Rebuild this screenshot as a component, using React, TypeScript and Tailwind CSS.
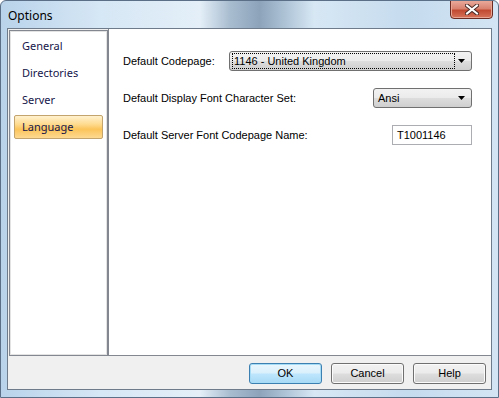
import React from "react";

const navItems = ["General", "Directories", "Server", "Language"];

function ComboBox({ value, focused, className }: { value: string; focused?: boolean; className: string }) {
    return (
        <div
            className={`relative flex items-center h-[20px] rounded-[3px] border border-[#707070] bg-[linear-gradient(180deg,#f2f2f2_0%,#ebebeb_48%,#dddddd_52%,#cfcfcf_100%)] ${className}`}>
            <div
                className={`flex-1 ml-[3px] mr-[17px] h-[14px] flex items-center pl-[1px] ${
                    focused ? "outline outline-1 outline-dotted outline-[#000]" : ""
                }`}>
                <span className="text-[11px] text-black leading-none">{value}</span>
            </div>
            <svg className="absolute right-[6px] top-[7px]" width="7" height="4" viewBox="0 0 7 4">
                <path d="M0 0h7L3.5 4z" fill="#000" />
            </svg>
        </div>
    );
}

function Button({ label, primary }: { label: string; primary?: boolean }) {
    return (
        <div
            className={`w-[73px] h-[21px] rounded-[3px] border flex items-center justify-center text-[11px] text-black ${
                primary
                    ? "border-[#3c7fb1] shadow-[inset_0_0_0_1px_#a6dcf5] bg-[linear-gradient(180deg,#eaf6fd_0%,#d9f0fc_48%,#bee6fd_52%,#a7d9f5_100%)]"
                    : "border-[#707070] shadow-[inset_0_0_0_1px_#fbfbfb] bg-[linear-gradient(180deg,#f2f2f2_0%,#ebebeb_48%,#dddddd_52%,#cfcfcf_100%)]"
            }`}>
            {label}
        </div>
    );
}

export default function App() {
    return (
        <div
            className="w-[499px] h-[398px] flex flex-col rounded-t-[6px] border border-[#5b6f86] bg-[linear-gradient(90deg,#b9d3ea_0%,#d6e7f5_20%,#e4eff8_40%,#a9bdd0_46%,#8ca3ba_52%,#b3c8da_58%,#d7e7f4_63%,#c5dbee_82%,#d3e5f4_100%)] overflow-hidden"
            style={{ fontFamily: '"Liberation Sans", Arial, sans-serif' }}>
            {/* Title bar */}
            <div className="relative h-[27px] flex items-center px-[7px]">
                <span className="text-[12px] text-black pt-[3px]" style={{ fontFamily: '"Noto Sans", sans-serif' }}>
                    Options
                </span>
                <div className="absolute right-[5px] top-[-1px] w-[43px] h-[19px] rounded-b-[4px] border border-[#6b2a22] shadow-[inset_0_0_0_1px_#e9a593] bg-[linear-gradient(180deg,#e9a99a_0%,#d8826f_45%,#c24a32_55%,#d6735a_100%)] flex items-center justify-center">
                    <svg width="14" height="11" viewBox="0 0 14 11">
                        <path d="M2 1.5L12 9.5M12 1.5L2 9.5" stroke="#4a2a26" strokeWidth="4" strokeLinecap="square" />
                        <path d="M2 1.5L12 9.5M12 1.5L2 9.5" stroke="#fff" strokeWidth="2" strokeLinecap="square" />
                    </svg>
                </div>
            </div>

            {/* Client area */}
            <div className="flex-1 mx-[6px] mb-[7px] border border-[#6d7b8a] bg-[#f0f0f0] flex flex-col">
                <div className="flex h-[327px]">
                    {/* Navigation */}
                    <div className="mt-[1px] ml-[1px] w-[99px] h-[326px] border border-[#828790] bg-white shadow-[inset_0_0_0_1px_#e3e3e3] pt-[3px] px-[4px]">
                        {navItems.map((item) => (
                            <div
                                key={item}
                                className={`h-[24px] mb-[3px] flex items-center pl-[7px] text-[11px] text-[#15154a] ${
                                    item === "Language"
                                        ? "rounded-[2px] border border-[#c2a46c] bg-[linear-gradient(180deg,#fff1cf_0%,#fed98a_40%,#fbc45a_60%,#fdd991_100%)]"
                                        : "border border-transparent"
                                }`}
                                style={{ fontFamily: '"Noto Sans", sans-serif' }}>
                                {item}
                            </div>
                        ))}
                    </div>

                    {/* Settings */}
                    <div className="flex-1 bg-white border-l border-b border-[#828790] pl-[14px] pr-[19px] pt-[22px] text-[11px] text-black">
                        <div className="flex items-center h-[20px]">
                            <span className="w-[106px]">Default Codepage:</span>
                            <ComboBox value="1146 - United Kingdom" focused className="flex-1" />
                        </div>
                        <div className="flex items-center justify-between h-[20px] mt-[17px]">
                            <span>Default Display Font Character Set:</span>
                            <ComboBox value="Ansi" className="w-[99px]" />
                        </div>
                        <div className="flex items-center justify-between h-[20px] mt-[17px]">
                            <span>Default Server Font Codepage Name:</span>
                            <div className="w-[80px] h-[20px] border border-[#abadb3] bg-white flex items-center pl-[4px]">
                                T1001146
                            </div>
                        </div>
                    </div>
                </div>

                {/* Buttons */}
                <div className="flex-1 flex justify-end items-start gap-[9px] pt-[7px] pr-[5px]">
                    <Button label="OK" primary />
                    <Button label="Cancel" />
                    <Button label="Help" />
                </div>
            </div>
        </div>
    );
}
